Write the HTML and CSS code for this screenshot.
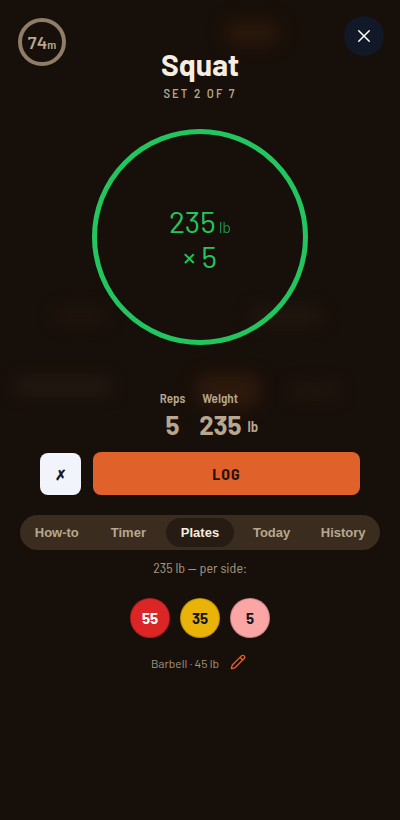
FILE: index.html
```html
<!DOCTYPE html>
<html lang="en">
<head>
<meta charset="utf-8">
<meta name="viewport" content="width=device-width, initial-scale=1">
<title>Squat – Set 2 of 7</title>
<link rel="stylesheet" href="styles.css">
</head>
<body>
<main class="workout">
  <div class="backdrop" aria-hidden="true">
    <span class="glow glow-top"></span>
    <span class="glow glow-mid"></span>
    <span class="glow glow-left"></span>
    <span class="glow glow-right"></span>
    <span class="glow glow-row-left"></span>
    <span class="glow glow-row-right"></span>
  </div>
  <div class="elapsed"><strong>74</strong><span>m</span></div>
  <button class="close" type="button" aria-label="Close">
    <svg viewBox="0 0 24 24"><path d="M5 5l14 14M19 5L5 19"/></svg>
  </button>
  <header class="heading">
    <h1>Squat</h1>
    <p>SET 2 OF 7</p>
  </header>
  <section class="target">
    <div>235<small>lb</small></div>
    <div>× 5</div>
  </section>
  <section class="entry">
    <div class="field">
      <span class="label">Reps</span>
      <span class="value">5</span>
    </div>
    <div class="field weight">
      <span class="label">Weight</span>
      <span class="value">235<small>lb</small></span>
    </div>
  </section>
  <div class="actions">
    <button class="skip" type="button" aria-label="Skip set">✗</button>
    <button class="log" type="button">LOG</button>
  </div>
  <nav class="tabs">
    <button type="button">How-to</button>
    <button type="button">Timer</button>
    <button type="button" class="active">Plates</button>
    <button type="button">Today</button>
    <button type="button">History</button>
  </nav>
  <section class="plates">
    <p class="per-side">235 lb — per side:</p>
    <div class="discs">
      <span class="disc red">55</span>
      <span class="disc yellow">35</span>
      <span class="disc pink">5</span>
    </div>
    <div class="bar">
      <span>Barbell · 45 lb</span>
      <button type="button" aria-label="Edit bar">
        <svg viewBox="0 0 24 24"><path d="M21.2 6.8a2.8 2.8 0 0 0-4-4L3.8 16.2a2 2 0 0 0-.5.8L2 21.4a.5.5 0 0 0 .6.6L7 20.7a2 2 0 0 0 .8-.5zM15 5l4 4"/></svg>
      </button>
    </div>
  </section>
</main>
</body>
</html>
```
FILE: styles.css
```css
* { box-sizing: border-box; }
body {
  margin: 0;
  background: #170f09;
  color: #b8a78e;
  font-family: Barlow, Roboto, sans-serif;
}
h1, p { margin: 0; }
button {
  border: 0;
  padding: 0;
  background: none;
  color: inherit;
  font: inherit;
}
svg { display: block; fill: none; stroke: currentColor; stroke-linecap: round; stroke-linejoin: round; }
small { font-weight: inherit; line-height: 1; }

.workout {
  position: relative;
  min-height: 100vh;
  padding: 47px 20px 20px;
  overflow: hidden;
  isolation: isolate;
}

.backdrop { position: absolute; inset: 0; z-index: -1; }
.glow { position: absolute; border-radius: 12px; filter: blur(8px); }
.glow-top { left: 224px; top: 20px; width: 56px; height: 26px; background: #29170b; }
.glow-mid { left: 196px; top: 374px; width: 64px; height: 34px; background: #2d190c; }
.glow-left { left: 14px; top: 378px; width: 98px; height: 16px; background: #241a14; }
.glow-right { left: 290px; top: 384px; width: 50px; height: 14px; background: #21170f; }
.glow-row-left { left: 54px; top: 308px; width: 54px; height: 16px; background: #1f150e; }
.glow-row-right { left: 250px; top: 308px; width: 74px; height: 16px; background: #211810; }

.elapsed span, .label, .value small, .heading p, .log, .per-side {
  font-family: "Barlow Semi Condensed", Barlow, Roboto, sans-serif;
}

.elapsed {
  position: absolute;
  top: 18px;
  left: 18px;
  display: flex;
  justify-content: center;
  align-items: baseline;
  width: 48px;
  height: 48px;
  border: 4px solid #8f7d68;
  border-radius: 50%;
  line-height: 41px;
}
.elapsed strong { font-size: 18px; font-weight: 600; }
.elapsed span { font-size: 12px; font-weight: 600; }

.close {
  position: absolute;
  top: 16px;
  right: 16px;
  display: grid;
  place-items: center;
  width: 40px;
  height: 40px;
  border-radius: 50%;
  background: #111827;
  color: #fff;
}
.close svg { width: 18px; height: 18px; stroke-width: 2; }

.heading { text-align: center; }
.heading h1 { color: #f6ecdf; font-size: 30px; font-weight: 700; line-height: 34px; }
.heading p { margin-top: 4px; font-size: 13px; font-weight: 500; line-height: 16px; letter-spacing: 2px; }

.target {
  display: flex;
  flex-direction: column;
  justify-content: center;
  width: 216px;
  height: 216px;
  margin: 28px auto 0;
  padding-top: 4px;
  border: 5px solid #22c55e;
  border-radius: 50%;
  color: #22c55e;
  font-size: 30px;
  font-weight: 400;
  line-height: 35px;
  text-align: center;
}
.target small { margin-left: 3px; font-size: 16px; opacity: .7; }

.entry { display: flex; justify-content: center; gap: 14px; margin-top: 45px; padding-left: 18px; }
.field { display: flex; flex-direction: column; align-items: center; }
.weight { align-items: flex-start; }
.label { font-size: 13px; font-weight: 600; line-height: 16px; }
.weight .label { padding-left: 3px; }
.value { font-size: 26px; font-weight: 700; line-height: 38px; }
.value small { margin-left: 6px; font-size: 15px; font-weight: 600; vertical-align: 3px; }

.actions { display: flex; align-items: flex-end; gap: 12px; margin: 8px 20px 0; }
.skip { width: 41px; height: 42px; border-radius: 8px; background: #f1f5fb; color: #0f172a; font-size: 14px; font-weight: 700; }
.log { flex: 1; height: 43px; border-radius: 8px; background: #e0622a; color: #2a1208; font-size: 16px; font-weight: 700; letter-spacing: 1px; }

.tabs { display: grid; grid-template-columns: repeat(5, 1fr); gap: 4px; margin-top: 20px; padding: 3px; border-radius: 18px; background: #3a2d1f; }
.tabs button { height: 29px; border-radius: 15px; font: 700 13px "Liberation Sans", sans-serif; }
.tabs .active { background: #261c14; color: #f6ecdf; }

.plates { display: flex; flex-direction: column; align-items: center; color: #a39580; }
.per-side { margin-top: 9px; font-size: 14px; line-height: 18px; }
.discs { display: flex; gap: 10px; margin-top: 21px; }
.disc { display: grid; place-items: center; width: 40px; height: 40px; border: 1px solid rgba(0, 0, 0, .2); border-radius: 50%; font-size: 15px; font-weight: 700; color: #111827; }
.red { background: #dc2626; color: #fff; }
.yellow { background: #eab308; }
.pink { background: #fca5a5; }
.bar { display: flex; align-items: center; gap: 11px; margin-top: 16px; padding-right: 3px; font-size: 12px; line-height: 18px; }
.bar button { margin-bottom: 2px; color: #e0622a; }
.bar svg { width: 16px; height: 16px; stroke-width: 2; }
```
